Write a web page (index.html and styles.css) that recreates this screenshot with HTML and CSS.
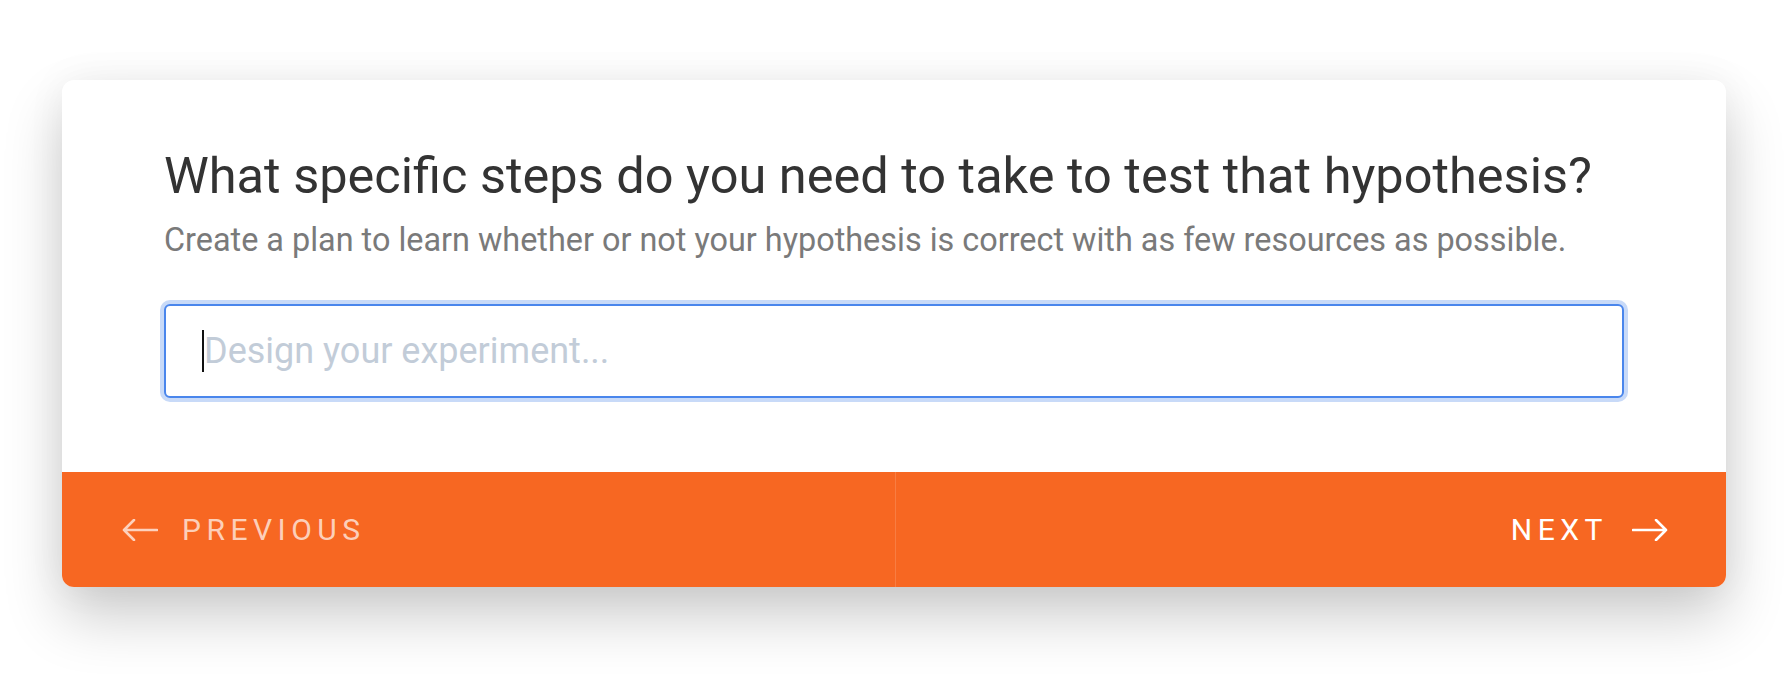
FILE: index.html
```html
<!DOCTYPE html>
<html lang="en">
<head>
    <meta charset="UTF-8">
    <meta name="viewport" content="width=device-width, initial-scale=1.0">
    <title>Experiment Step</title>
    <link rel="stylesheet" href="styles.css">
</head>
<body>

    <div class="card">
        <div class="card-body">
            <h1>What specific steps do you need to take to test that hypothesis?</h1>
            <p class="hint">Create a plan to learn whether or not your hypothesis is correct with as few resources as possible.</p>

            <div class="field">
                <span class="caret"></span>
                <input type="text" placeholder="Design your experiment..." />
            </div>
        </div>

        <!-- Step navigation -->
        <div class="card-nav">
            <button class="nav-btn prev">
                <svg width="36" height="22" viewBox="0 0 36 22" fill="none" stroke="currentColor" stroke-width="2.6" stroke-linecap="round" stroke-linejoin="round">
                    <path d="M35 11H2M12 1L2 11l10 10"/>
                </svg>
                <span>Previous</span>
            </button>
            <button class="nav-btn next">
                <span>Next</span>
                <svg width="36" height="22" viewBox="0 0 36 22" fill="none" stroke="currentColor" stroke-width="2.6" stroke-linecap="round" stroke-linejoin="round">
                    <path d="M1 11h33M24 1l10 10-10 10"/>
                </svg>
            </button>
        </div>
    </div>

</body>
</html>
```

FILE: styles.css
```css
html, body {
    height: 100%;
}

body {
    font-family: Roboto, 'Noto Sans', sans-serif;
    background: #ffffff;
    margin: 0;
    padding: 80px 0 0 62px;
    box-sizing: border-box;
    color: #333;
}

.card {
    width: 1664px;
    background-color: #ffffff;
    border-radius: 12px;
    overflow: hidden;
    box-shadow: 0 30px 60px rgba(0, 0, 0, 0.2), 0 0 40px rgba(0, 0, 0, 0.05);
}

.card-body {
    padding: 66px 102px 74px;
}

h1 {
    font-size: 50.5px;
    font-weight: 400;
    line-height: 60px;
    margin: 0;
    color: #333333;
}

.hint {
    font-size: 32.4px;
    line-height: 40px;
    margin: 14px 0 0;
    color: #7a7a7a;
}

.field {
    position: relative;
    margin-top: 44px;
}

input {
    display: block;
    box-sizing: border-box;
    width: 100%;
    height: 94px;
    padding: 0 38px;
    font-family: inherit;
    font-size: 36px;
    color: #333;
    border: 2px solid #4a86ec;
    border-radius: 6px;
    box-shadow: 0 0 0 4px #c8daf8;
    outline: none;
}

input::placeholder {
    color: #c2ccd8;
}

.caret {
    position: absolute;
    left: 38px;
    top: 26px;
    width: 2px;
    height: 42px;
    background: #111;
}

.card-nav {
    display: flex;
    height: 115px;
    background-color: #f76722;
}

.nav-btn {
    flex: 1;
    display: flex;
    align-items: center;
    gap: 24px;
    background: none;
    border: none;
    font-family: inherit;
    font-size: 30px;
    letter-spacing: 5.5px;
    text-transform: uppercase;
    cursor: pointer;
}

.nav-btn.prev {
    padding: 0 0 0 60px;
    color: rgba(255, 255, 255, 0.7);
    border-right: 1px solid rgba(255, 255, 255, 0.15);
}

.nav-btn.next {
    justify-content: flex-end;
    padding: 0 58px 0 0;
    color: #ffffff;
}
```
